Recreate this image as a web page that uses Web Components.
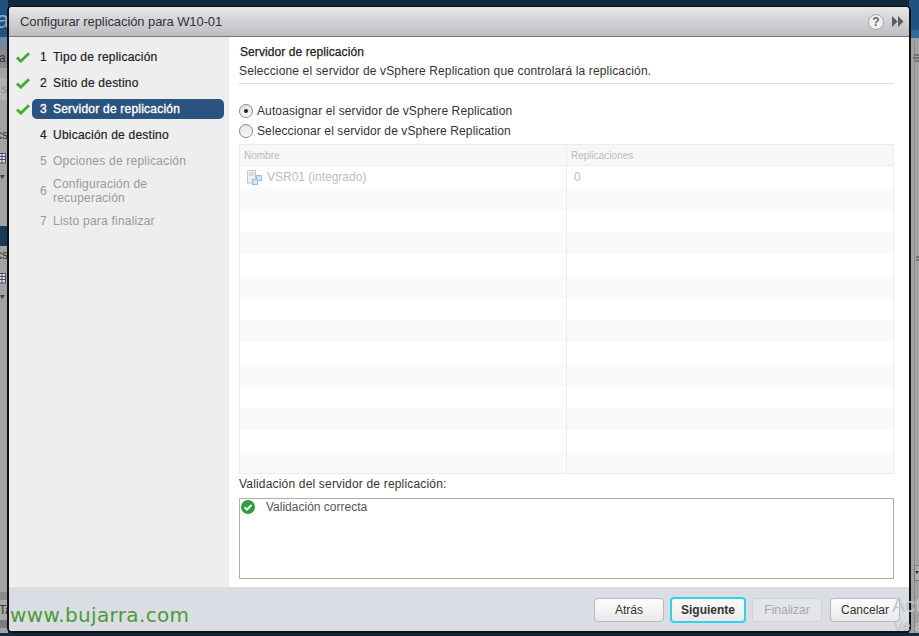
<!DOCTYPE html>
<html lang="es">
<head>
<meta charset="utf-8">
<title>Configurar replicación</title>
<style>
html, body { margin: 0; height: 100%; }
body { width: 919px; height: 636px; overflow: hidden; font-family: "Liberation Sans", Arial, sans-serif; }
</style>
</head>
<body>
<vs-desktop>
    <vs-wizard heading="Configurar replicación para W10-01">
        <vs-step slot="steps" num="1" state="done">Tipo de replicación</vs-step>
        <vs-step slot="steps" num="2" state="done">Sitio de destino</vs-step>
        <vs-step slot="steps" num="3" state="current">Servidor de replicación</vs-step>
        <vs-step slot="steps" num="4">Ubicación de destino</vs-step>
        <vs-step slot="steps" num="5" state="off">Opciones de replicación</vs-step>
        <vs-step slot="steps" num="6" state="off" tall>Configuración de recuperación</vs-step>
        <vs-step slot="steps" num="7" state="off">Listo para finalizar</vs-step>

        <vs-radio checked>Autoasignar el servidor de vSphere Replication</vs-radio>
        <vs-radio>Seleccionar el servidor de vSphere Replication</vs-radio>
        <vs-grid></vs-grid>
        <vs-validation>Validación correcta</vs-validation>

        <vs-button slot="buttons">Atrás</vs-button>
        <vs-button slot="buttons" focused>Siguiente</vs-button>
        <vs-button slot="buttons" disabled>Finalizar</vs-button>
        <vs-button slot="buttons">Cancelar</vs-button>
    </vs-wizard>
</vs-desktop>

<script>
const DESKTOP = document.createElement("template")
DESKTOP.innerHTML = `<style>
:host {
    display: block;
    position: relative;
    width: 919px;
    height: 636px;
    overflow: hidden;
    background:
        linear-gradient(#20527f 0 37px, #6f8aa3 37px 50px, #8a8a8a 50px 68px, #a3a3a3 68px 78px, #b2b2b2 78px 100px,
            #a3a3a3 100px 226px, #1a3a5c 226px 246px, #a3a3a3 246px 592px, #8b8b8b 592px 600px, #a9a9a9 600px 620px,
            #7c7c7c 620px 628px, #a3a3a3 628px 633px, #14293c 633px) 0 0 / 8px 100% no-repeat,
        linear-gradient(#8c8c8c, #8c8c8c) 914px 38px / 1px 595px no-repeat,
        linear-gradient(#20527f 0 30px, #2f6a99 30px 38px, #a3a3a3 38px 633px, #14293c 633px) 100% 0 / 10px 100% no-repeat,
        #14293c;
}
.ghost { position: absolute; color: #333; font-size: 12px; line-height: 14px; white-space: nowrap; }
.big { color: #8fa9c0; font-size: 24px; line-height: 26px; }
.wm { position: absolute; left: 10px; top: 603px; z-index: 3; color: #4c9a36; white-space: nowrap;
    font: 20px/24px "DejaVu Sans", sans-serif; letter-spacing: 0.35px; }
.act { position: absolute; z-index: 3; color: #c2c6cb; white-space: nowrap; }
svg.bit { position: absolute; display: block; }
::slotted(*) { position: absolute; left: 7px; top: 6px; }
</style>
<span class="ghost big" style="left:-4px;top:7px">a</span>
<span class="ghost" style="left:-1px;top:51px">a</span>
<span class="ghost" style="left:1px;top:82px;color:#888">s</span>
<span class="ghost" style="left:-4px;top:128px">cs</span>
<span class="ghost" style="left:-4px;top:248px">cs</span>
<span class="ghost" style="left:-1px;top:603px">Ta</span>
<svg class="bit" style="left:0;top:153px" width="6" height="11"><path d="M-1 .5h6.500v9.500h-6.500M-1 3.500h6M-1 6.500h6M2 .5v9.500" fill="#dcdfe6" stroke="#47506a"/></svg>
<svg class="bit" style="left:0;top:273px" width="6" height="11"><path d="M-1 .5h6.500v9.500h-6.500M-1 3.500h6M-1 6.500h6M2 .5v9.500" fill="#dcdfe6" stroke="#47506a"/></svg>
<svg class="bit" style="left:0;top:174px" width="8" height="11"><path d="M0 1h5l-3 4zM7 0h1v10h-1z" fill="#444"/></svg>
<svg class="bit" style="left:0;top:294px" width="8" height="11"><path d="M0 1h5l-3 4zM7 0h1v10h-1z" fill="#444"/></svg>
<svg class="bit" style="left:913px;top:54px" width="6" height="8"><path d="M1 1h5M0 4h6M2 7h4" stroke="#444"/></svg>
<svg class="bit" style="left:916px;top:256px" width="3" height="6"><path d="M0 1h3M0 4h3" stroke="#444"/></svg>
<svg class="bit" style="left:914px;top:565px" width="5" height="16"><path d="M.5 .5h5v15h-5z" fill="#b0b0b0" stroke="#777"/><path d="M1 6h4l-2 3z" fill="#333"/></svg>
<slot></slot>
<span class="wm">www.bujarra.com</span>
<span class="act" style="left:892px;top:594px;font-size:20px">Act</span>
<span class="act" style="left:893px;top:617px;font-size:15px">Ve a</span>`

class VsDesktop extends HTMLElement {
    constructor(){
        super();
        this.attachShadow({mode: "open"});
        this.shadowRoot.appendChild(DESKTOP.content.cloneNode(true));
    }
}
customElements.define("vs-desktop", VsDesktop)

const WIZARD = document.createElement("template")
WIZARD.innerHTML = `<style>
:host {
    display: flex;
    flex-direction: column;
    width: 904px;
    height: 627px;
    box-sizing: border-box;
    border: 2px solid #111;
    border-top-width: 1px;
    border-radius: 5px;
    background: #fff;
    overflow: hidden;
    font-size: 12px;
    color: #333;
}
header {
    flex: none;
    display: flex;
    align-items: center;
    height: 30px;
    box-sizing: border-box;
    padding: 0 5px 0 11px;
    background: linear-gradient(#e6e7ea, #bcbdc0);
    border-bottom: 1px solid #777;
    color: #333;
}
header .t { flex: 1; font-size: 13px; letter-spacing: -0.09px; }
header svg { display: block; }
.main { flex: 1; display: flex; min-height: 0; }
nav {
    flex: none;
    width: 220px;
    box-sizing: border-box;
    padding: 9px 5px 0 0;
    background: #eeeeee;
    display: flex;
    flex-direction: column;
    gap: 4px;
}
.content {
    flex: 1;
    min-width: 0;
    box-sizing: border-box;
    padding: 8px 15px 8px 10px;
    display: flex;
    flex-direction: column;
}
h2 { margin: 0 0 0 1px; font-size: 12px; line-height: 15px; font-weight: normal; color: #222; letter-spacing: 0.08px; -webkit-text-stroke: 0.25px #222; }
p { margin: 4px 0 0; font-size: 12px; line-height: 14px; color: #333; letter-spacing: 0.14px; }
hr { margin: 5px 0 0; border: 0; border-top: 1px solid #ddd; }
.radios { margin-top: 19px; display: flex; flex-direction: column; gap: 5px; }
footer {
    flex: none;
    position: relative;
    height: 44px;
    box-sizing: border-box;
    background: #dadee4;
    display: flex;
    justify-content: flex-end;
    align-items: center;
    gap: 6px;
    padding: 2px 9px 0 0;
}
footer ::slotted(:last-child) { margin-left: 2px; }
.grip { position: absolute; right: 0; bottom: 0; display: block; }
</style>
<header>
    <span class="t" id="title"></span>
    <svg width="18" height="18" viewBox="0 0 18 18" style="margin-right:7px">
        <circle cx="9" cy="9" r="7.500" fill="#f1f1f1" stroke="#a5a5a5"/>
        <text x="9" y="13.200" text-anchor="middle" font-family="Liberation Sans" font-weight="700" font-size="12" fill="#666">?</text>
    </svg>
    <svg width="12" height="11" viewBox="0 0 12 11">
        <path d="M0 0l5.500 5.500-5.500 5.500zM6 0l5.500 5.500-5.500 5.500z" fill="#5d5d5d"/>
    </svg>
</header>
<div class="main">
    <nav><slot name="steps"></slot></nav>
    <div class="content">
        <h2>Servidor de replicación</h2>
        <p>Seleccione el servidor de vSphere Replication que controlará la replicación.</p>
        <hr>
        <div class="radios"><slot></slot></div>
    </div>
</div>
<footer>
    <slot name="buttons"></slot>
    <svg class="grip" width="10" height="10" fill="#b4b8bd"><path d="M8 0h1v1H8zM6 2h1v1H6zM8 2h1v1H8zM4 4h1v1H4zM6 4h1v1H6zM8 4h1v1H8zM2 6h1v1H2zM4 6h1v1H4zM6 6h1v1H6zM8 6h1v1H8zM0 8h1v1H0zM2 8h1v1H2zM4 8h1v1H4zM6 8h1v1H6zM8 8h1v1H8z"/></svg>
</footer>`

class VsWizard extends HTMLElement {
    constructor(){
        super();
        this.attachShadow({mode: "open"});
        this.shadowRoot.appendChild(WIZARD.content.cloneNode(true));
    }

    connectedCallback(){
        this.shadowRoot.getElementById("title").textContent = this.getAttribute("heading")
    }
}
customElements.define("vs-wizard", VsWizard)

const STEP = document.createElement("template")
STEP.innerHTML = `<style>
:host {
    display: grid;
    grid-template-columns: 23px 1fr;
    align-items: center;
    min-height: 22px;
    font-size: 12px;
    color: #222;
    line-height: 14px;
    letter-spacing: 0.22px;
}
:host([tall]) { min-height: 30px; }
:host([state="off"]) { color: #999; }
.check { padding-left: 7px; height: 11px; }
.check svg { display: none; }
:host([state="done"]) .check svg, :host([state="current"]) .check svg { display: block; }
.pill {
    display: grid;
    grid-template-columns: 13px 1fr;
    align-items: center;
    padding: 0 8px;
    min-height: 20px;
    border-radius: 5px;
    -webkit-text-stroke: 0.2px currentColor;
}
:host([state="off"]) .pill { -webkit-text-stroke: 0; }
:host([state="current"]) .pill { background: #2a5380; color: #fff; -webkit-text-stroke: 0.35px #fff; }
</style>
<div class="check"><svg width="14" height="11" viewBox="0 0 14 11"><path d="M1 5.500l3.800 3.700L13 1.200" fill="none" stroke="#3fae2a" stroke-width="2.800"/></svg></div>
<div class="pill"><span id="n"></span><span><slot></slot></span></div>`

class VsStep extends HTMLElement {
    constructor(){
        super();
        this.attachShadow({mode: "open"});
        this.shadowRoot.appendChild(STEP.content.cloneNode(true));
    }

    connectedCallback(){
        this.shadowRoot.getElementById("n").textContent = this.getAttribute("num")
    }
}
customElements.define("vs-step", VsStep)

const RADIO = document.createElement("template")
RADIO.innerHTML = `<style>
:host {
    display: flex;
    align-items: center;
    gap: 4px;
    height: 15px;
    font-size: 12px;
    color: #333;
    letter-spacing: 0.11px;
}
i {
    flex: none;
    width: 12px;
    height: 12px;
    border: 1px solid #8a8a8a;
    border-radius: 50%;
    background: linear-gradient(#e4e4e4, #fafafa);
    display: grid;
    place-items: center;
}
:host([checked]) i::after { content: ""; width: 4px; height: 4px; border-radius: 50%; background: #222; }
</style>
<i></i><span><slot></slot></span>`

class VsRadio extends HTMLElement {
    constructor(){
        super();
        this.attachShadow({mode: "open"});
        this.shadowRoot.appendChild(RADIO.content.cloneNode(true));
    }
}
customElements.define("vs-radio", VsRadio)

const GRID = document.createElement("template")
GRID.innerHTML = `<style>
:host {
    display: block;
    margin-top: 1px;
    height: 330px;
    box-sizing: border-box;
    border: 1px solid #ececec;
    font-size: 10px;
    overflow: hidden;
}
.row { display: grid; grid-template-columns: 327px 1fr; height: 22px; }
.row > div { box-sizing: border-box; padding-left: 4px; display: flex; align-items: center; gap: 5px; }
.row > div:first-child { border-right: 1px solid #ececec; }
.head { height: 21px; box-sizing: border-box; background: #f7f7f7; border-bottom: 1px solid #ececec; color: #bbb; padding-top: 1px; }
.row.alt { background: #f9fafc; }
.cell { font-size: 12px; color: #bdbdbd; }
</style>
<div id="rows"></div>`

class VsGrid extends HTMLElement {
    constructor(){
        super();
        this.attachShadow({mode: "open"});
        this.shadowRoot.appendChild(GRID.content.cloneNode(true));
    }

    connectedCallback(){
        let html = `<div class="row head"><div>Nombre</div><div>Replicaciones</div></div>`
        html += `<div class="row cell"><div><svg width="16" height="16" viewBox="0 0 16 16" style="margin-left:2px">
            <path d="M1.500 1.500h8v12.500h-8z" fill="#eef0f3" stroke="#c3c6cb"/><path d="M3 4h5M3 6h5" stroke="#c3c6cb"/>
            <rect x="10.500" y="6.500" width="5" height="5" fill="#d4e6f5" stroke="#9dc0de"/><rect x="6.500" y="10.500" width="5" height="5" fill="#d4e6f5" stroke="#9dc0de"/>
            </svg>VSR01 (integrado)</div><div style="padding-left:7px">0</div></div>`
        for(let i = 0; i < 13; i++){
            html += `<div class="row${i % 2 == 0 ? " alt" : ""}"><div></div><div></div></div>`
        }
        this.shadowRoot.getElementById("rows").innerHTML = html
    }
}
customElements.define("vs-grid", VsGrid)

const VALIDATION = document.createElement("template")
VALIDATION.innerHTML = `<style>
:host { display: block; margin-top: -2px; font-size: 12px; color: #333; }
.l { line-height: 15px; letter-spacing: 0.18px; }
.box {
    margin-top: 6px;
    height: 81px;
    box-sizing: border-box;
    border: 1px solid #b0b0b0;
    display: flex;
    align-items: flex-start;
    gap: 11px;
    padding: 1px 1px;
    color: #555;
    line-height: 15px;
}
svg { display: block; }
</style>
<div class="l">Validación del servidor de replicación:</div>
<div class="box">
    <svg width="14" height="14" viewBox="0 0 14 14"><circle cx="7" cy="7" r="7" fill="#2f9e3a"/><path d="M3.600 7.200l2.400 2.400 4.400-4.600" fill="none" stroke="#fff" stroke-width="2"/></svg>
    <span><slot></slot></span>
</div>`

class VsValidation extends HTMLElement {
    constructor(){
        super();
        this.attachShadow({mode: "open"});
        this.shadowRoot.appendChild(VALIDATION.content.cloneNode(true));
    }
}
customElements.define("vs-validation", VsValidation)

const BUTTON = document.createElement("template")
BUTTON.innerHTML = `<style>
:host {
    display: flex;
    align-items: center;
    justify-content: center;
    width: 70px;
    height: 24px;
    box-sizing: border-box;
    border: 1px solid #b5b8bc;
    border-radius: 4px;
    background: linear-gradient(#fdfdfd, #e9e9e9);
    font-size: 12px;
    color: #333;
}
:host([focused]) {
    width: 76px;
    height: 26px;
    border: 2px solid #2fd3ef;
    font-weight: 700;
}
:host([disabled]) {
    background: #e3e5e8;
    border-color: #cdd0d4;
    color: #a5a7aa;
}
</style>
<slot></slot>`

class VsButton extends HTMLElement {
    constructor(){
        super();
        this.attachShadow({mode: "open"});
        this.shadowRoot.appendChild(BUTTON.content.cloneNode(true));
    }
}
customElements.define("vs-button", VsButton)
</script>
</body>
</html>
